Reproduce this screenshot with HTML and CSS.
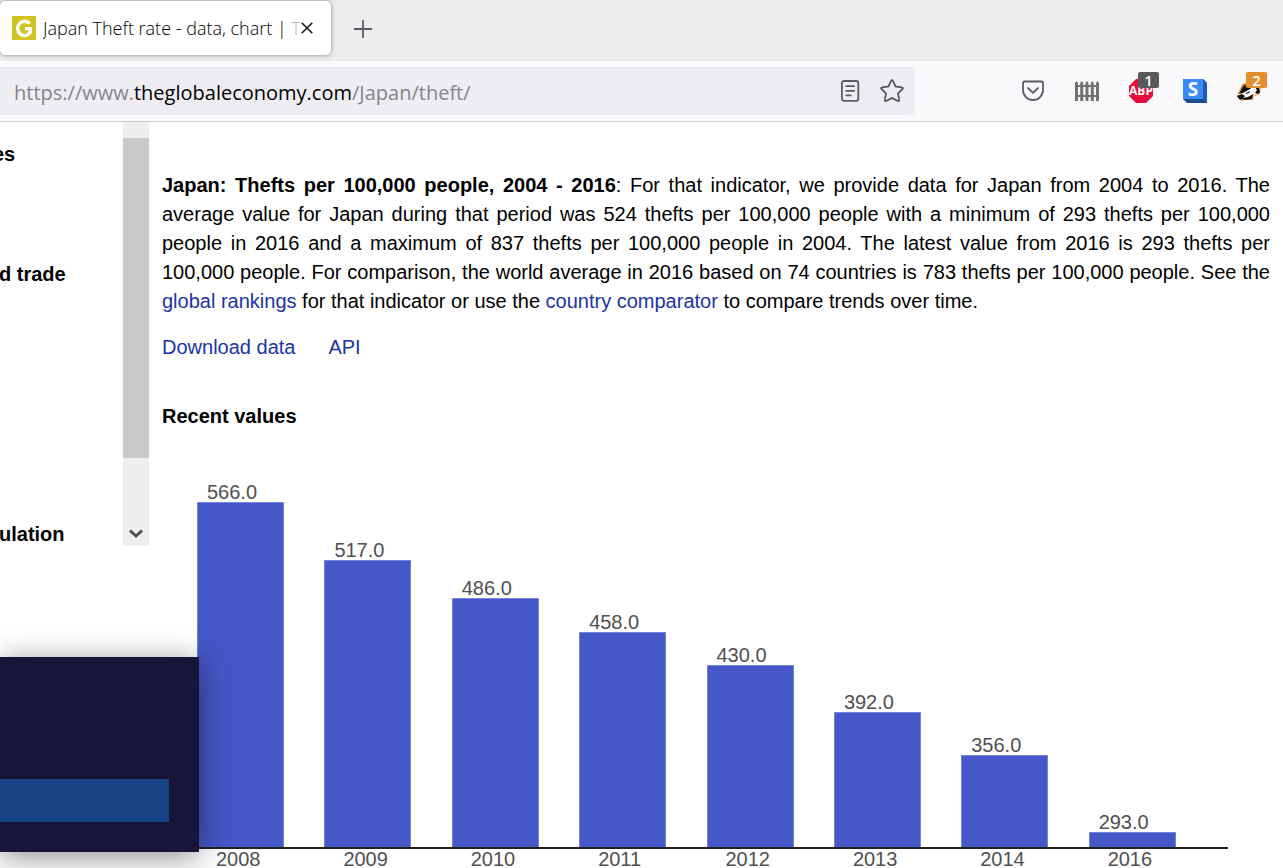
FILE: index.html
```html
<!DOCTYPE html>
<html lang="en">
<head>
<meta charset="utf-8">
<title>Japan Theft rate - data, chart</title>
<link rel="stylesheet" href="styles.css">
</head>
<body>
<div class="window">
  <header>
    <div class="tabs">
      <div class="tab">
        <svg class="favicon" viewBox="0 0 24 24" aria-hidden="true"><rect width="24" height="24" fill="#d2c41e"/><path d="M17.6 7.6A6.8 7.2 0 1 0 18.3 16.2V12.8H13" fill="none" stroke="#fff" stroke-width="3.4"/></svg>
        <span class="tab-title">Japan Theft rate - data, chart | <span class="fade">Th</span></span>
        <button class="icon-btn close" aria-label="Close tab"><svg width="12" height="12" viewBox="0 0 12 12"><path d="M.7.7l10.6 10.6M11.3.7L.7 11.3" stroke="#15141a" stroke-width="1.5"/></svg></button>
      </div>
      <button class="icon-btn" aria-label="New tab"><svg width="18" height="18" viewBox="0 0 18 18"><path d="M9 0v18M0 9h18" stroke="#5b5b66" stroke-width="1.8"/></svg></button>
    </div>
    <div class="toolbar">
      <div class="urlbar">
        <span class="url">https://www.<b>theglobaleconomy.com</b>/Japan/theft/</span>
        <button class="icon-btn" aria-label="Reader view"><svg width="24" height="24" viewBox="0 0 24 24" fill="none" stroke="#5b5b66" stroke-width="1.8"><rect x="3.9" y="2" width="16.4" height="19.8" rx="2"/><path d="M8.2 7.2h8M8.2 11.8h8M8.2 16.4h4.6" stroke-linecap="round"/></svg></button>
        <button class="icon-btn" aria-label="Bookmark"><svg width="24" height="24" viewBox="0 0 24 24" fill="none" stroke="#5b5b66" stroke-width="1.8" stroke-linejoin="round"><path d="M11.1 1.8q.9-1.5 1.8 0l2.7 5.7 6.3.8q1.6.4.6 1.7l-4.5 4.4 1.1 6.5q.1 1.6-1.4 1.1L12 18.9 6.3 22q-1.5.5-1.4-1.1L6 14.4 1.5 10Q.5 8.7 2.1 8.3l6.3-.8z"/></svg></button>
      </div>
      <div class="tools">
        <button class="icon-btn" aria-label="Pocket"><svg width="24" height="24" viewBox="0 0 24 24" fill="none" stroke="#5b5b66" stroke-width="1.8"><path d="M3.5 2.5h17q1.500 0 1.500 1.500v7a10 10 0 0 1-20 0V4q0-1.500 1.500-1.500z"/><path d="M7 9l5 4.800L17 9" stroke-linecap="round" stroke-linejoin="round"/></svg></button>
        <button class="icon-btn" aria-label="Fence"><svg width="24" height="24" viewBox="0 0 24 24" fill="#727272"><path d="M0 6h24v2H0zM0 16h24v2H0z"/><path d="M0 4l1.500-2L3 4v18H0zM5.200 4l1.500-2 1.500 2v18h-3zM10.500 4L12 2l1.500 2v18h-3zM15.800 4l1.500-2 1.500 2v18h-3zM21 4l1.500-2L24 4v18h-3z"/></svg></button>
        <button class="icon-btn" aria-label="Adblock Plus"><svg width="24" height="24" viewBox="0 0 24 24"><path d="M7 0h10l7 7v10l-7 7H7l-7-7V7z" fill="#e40d3d"/><text x="12" y="16" text-anchor="middle" class="abp">ABP</text></svg><span class="badge">1</span></button>
        <button class="icon-btn" aria-label="Stylus"><svg width="24" height="24" viewBox="0 0 24 24"><path d="M0 0h20l4 4v20H4l-4-4z" fill="#1a4b8c"/><path d="M20 0l4 4v20l-4-4z" fill="#1e5fb4"/><path d="M0 0h20v20H0z" fill="#3b8af8"/><text x="10" y="17" text-anchor="middle" class="stylus">S</text></svg></button>
        <button class="icon-btn" aria-label="Privacy Badger"><svg width="24" height="24" viewBox="0 0 24 24"><path d="M0 16L2 12 5 5l9-3 8 1 2 7-1 5-6 2-1 4-8 0-3 1-5-4z" fill="#f3a45a"/><path d="M1 16l6-5 1-5 7-2 6 2 1 8-6 2-2 4-8 0z" fill="#fff"/><path d="M5 9l2-3 4-1-3 3 6-2 5-2-6 6-7 4-4 1zM0 17l5-2 3 2-2 2 5-1 5-3-1 5-7 1-3-1-2 1zM16 5l5 1 2 7-2 2-3-1 2-3zM9 14l4-2-1 2-3 1z" fill="#111"/></svg><span class="badge orange">2</span></button>
      </div>
    </div>
  </header>
  <main>
    <aside>
      <nav>
        <a class="cut" href="#">es</a>
        <a href="#">d trade</a>
        <a href="#">ulation</a>
      </nav>
      <div class="scrollbar">
        <div class="thumb"></div>
        <button class="icon-btn" aria-label="Scroll down"><svg width="14" height="10" viewBox="0 0 14 10"><path d="M1 1.500l6 5.500 6-5.500" fill="none" stroke="#505050" stroke-width="3"/></svg></button>
      </div>
    </aside>
    <article>
      <p class="summary"><b>Japan: Thefts per 100,000 people, 2004 - 2016</b>: For that indicator, we provide data for Japan from 2004 to 2016. The average value for Japan during that period was 524 thefts per 100,000 people with a minimum of 293 thefts per 100,000 people in 2016 and a maximum of 837 thefts per 100,000 people in 2004. The latest value from 2016 is 293 thefts per 100,000 people. For comparison, the world average in 2016 based on 74 countries is 783 thefts per 100,000 people. See the <a href="#">global rankings</a> for that indicator or use the <a href="#">country comparator</a> to compare trends over time.</p>
      <p class="links"><a href="#">Download data</a><a href="#">API</a></p>
      <h2>Recent values</h2>
      <div class="chart">
        <div class="plot">
          <div class="col"><span>566.0</span><div class="bar" style="height:345px"></div></div>
          <div class="col"><span>517.0</span><div class="bar" style="height:287px"></div></div>
          <div class="col"><span>486.0</span><div class="bar" style="height:249px"></div></div>
          <div class="col"><span>458.0</span><div class="bar" style="height:215px"></div></div>
          <div class="col"><span>430.0</span><div class="bar" style="height:182px"></div></div>
          <div class="col"><span>392.0</span><div class="bar" style="height:135px"></div></div>
          <div class="col"><span>356.0</span><div class="bar" style="height:92px"></div></div>
          <div class="col"><span>293.0</span><div class="bar" style="height:15px"></div></div>
        </div>
        <div class="years"><span>2008</span><span>2009</span><span>2010</span><span>2011</span><span>2012</span><span>2013</span><span>2014</span><span>2016</span></div>
      </div>
    </article>
    <div class="popup"><button aria-label="Accept"></button></div>
  </main>
</div>
</body>
</html>
```
FILE: styles.css
```css
* { box-sizing: border-box; }
body { margin: 0; background: #fff; color: #000; font: 20px/28px "Liberation Sans", Arial, sans-serif; }
.window { height: 100vh; display: flex; flex-direction: column; overflow: hidden; }
svg { display: block; flex: none; }
button { border: 0; padding: 0; background: none; }
a { color: #2033a6; text-decoration: none; }
.icon-btn { position: relative; display: grid; place-items: center; flex: none; }

.tabs { height: 61px; padding-top: 1px; background: #ededed; display: flex; align-items: flex-start; }
.tabs > .icon-btn { width: 64px; height: 56px; }
.tab { width: 331px; height: 54px; padding: 0 17px 0 12px; display: flex; align-items: center; background: #fff; border-radius: 5px; box-shadow: 0 0 4px rgba(60, 60, 80, .6); }
.favicon { width: 24px; height: 24px; margin-right: 7px; }
.tab-title { flex: 1; overflow: hidden; white-space: nowrap; font: 300 18px/26px "Open Sans", sans-serif; }
.fade { color: #b4b4b4; }
.close { width: 14px; height: 24px; }

.toolbar { height: 61px; display: flex; align-items: center; background: #f9f9fb; border-bottom: 1px solid #ccc; }
.urlbar { flex: 1; height: 48px; padding: 0 11px 0 14px; display: flex; align-items: center; gap: 18px; background: #eeedf2; border-radius: 0 5px 5px 0; }
.url { flex: 1; padding-top: 4px; white-space: nowrap; color: #85858a; font: 20px/28px "Open Sans", sans-serif; }
.url b { font-weight: 400; color: #000; }
.tools { width: 368px; padding: 0 22px 0 106px; display: flex; justify-content: space-between; }
.badge { position: absolute; left: 9px; top: -7px; width: 21px; height: 16px; border-radius: 2px; background: #595959; color: #fff; font: 600 15px/16px "Open Sans", sans-serif; }
.badge.orange { background: #e58e2c; }
.abp { font: bold 12px "Open Sans", sans-serif; fill: #fff; }
.stylus { font: bold 19px "Open Sans", sans-serif; fill: #fff; }

main { position: relative; flex: 1; min-height: 0; display: flex; }
aside { width: 149px; flex: none; height: 424px; display: flex; overflow: hidden; }
nav { flex: 1; display: flex; flex-direction: column; padding-top: 18px; }
nav a { color: #000; font-weight: bold; margin-left: -1px; }
nav a.cut { margin: 0 0 92px -7px; }
nav a:last-child { margin-top: 232px; }
.scrollbar { width: 26px; padding-top: 16px; background: #eee; display: flex; flex-direction: column; justify-content: space-between; }
.thumb { height: 320px; background: #c9c9c9; }
.scrollbar .icon-btn { height: 24px; }

article { flex: 1; min-width: 0; padding: 49px 13px 0; }
.summary { margin: 0; line-height: 29px; text-align: justify; }
.links { margin: 17px 0 0; display: flex; gap: 33px; }
h2 { margin: 41px 0 0; font-size: 20px; line-height: 28px; }
.chart { margin: 52px 42px 0 35px; color: #505050; }
.plot { display: grid; grid-template-columns: repeat(8, 1fr); align-items: end; padding-right: 12px; border-bottom: 2px solid #222; }
.col span { display: block; padding-left: 10px; line-height: 20px; }
.bar { width: 87px; background: #4657c8; border: 1px solid #7186dc; border-bottom: 0; }
.years { display: grid; grid-template-columns: repeat(8, 1fr); padding-right: 12px; line-height: 20px; }
.years span { padding-left: 19px; }

.popup { position: absolute; left: 0; bottom: 16px; width: 199px; height: 195px; padding: 122px 30px 30px 0; background: #17163a; box-shadow: 0 5px 30px rgba(0, 0, 0, .45); }
.popup button { display: block; width: 100%; height: 43px; background: #174486; }
```
